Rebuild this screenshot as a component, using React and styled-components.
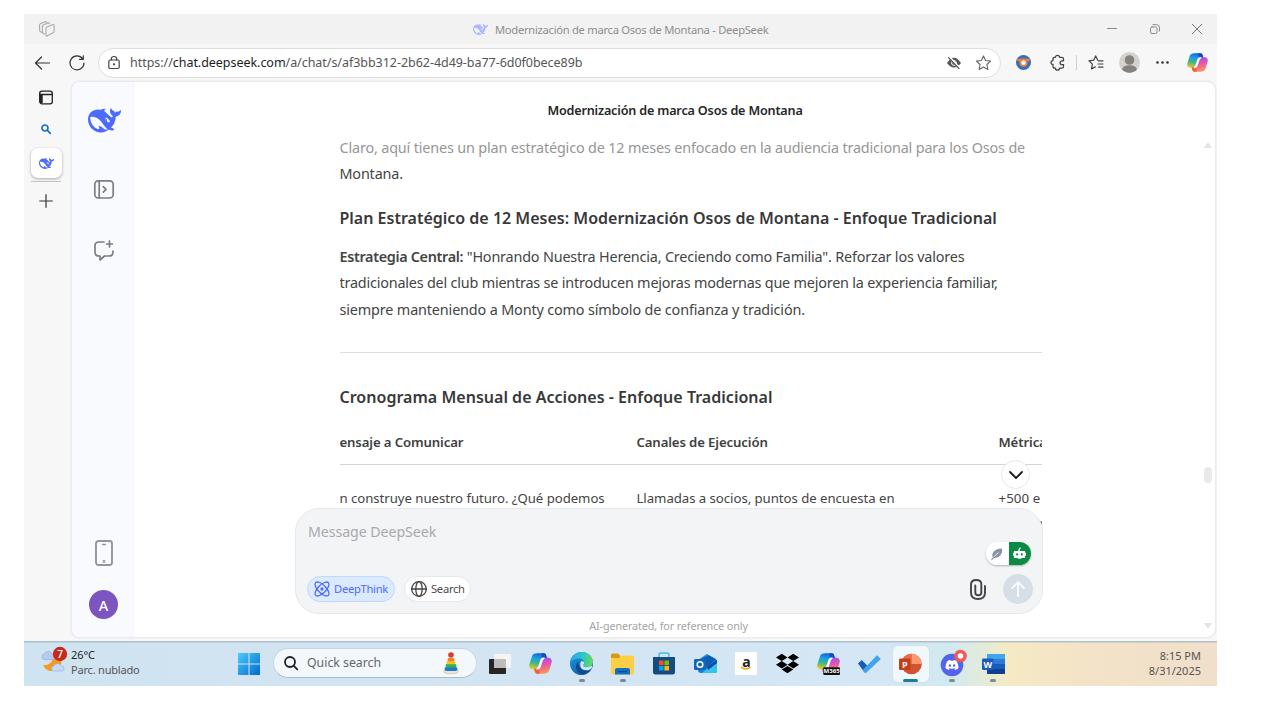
import React from 'react';
import styled, { createGlobalStyle } from 'styled-components';
import { FaDropbox, FaDiscord } from 'react-icons/fa6';

const Global = createGlobalStyle`
  * { box-sizing: border-box; }
  html, body { margin: 0; background: #fff; }
  body { font-family: "Noto Sans", "Open Sans", sans-serif; color: #404040; overflow: hidden; }
  svg { display: block; flex: none; overflow: visible; }
`;

const Screen = styled.div`
  width: 1280px;
  height: 720px;
  padding: 14px 63px 34px 24px;
  background: #fff;
`;
const Desktop = styled.div`
  width: 1193px;
  height: 672px;
  display: flex;
  flex-direction: column;
  background: #f7f7f7;
  overflow: hidden;
`;
const Label = styled.span`
  display: block;
  white-space: nowrap;
  font-size: ${(p) => p.$size || 12}px;
  line-height: ${(p) => p.$line || 18}px;
  font-weight: ${(p) => p.$weight || 400};
  color: ${(p) => p.$color || 'inherit'};
  letter-spacing: ${(p) => p.$track || 0}px;
`;
const Strong = styled.b`
  font-weight: 600;
  letter-spacing: -0.33px;
`;
const Slot = styled.div`
  width: ${(p) => p.$w}px;
  height: ${(p) => (p.$h ? `${p.$h}px` : 'auto')};
  margin-top: ${(p) => p.$top || 0}px;
  flex: none;
  display: flex;
  align-items: center;
  justify-content: center;
`;

/* Title bar */
const TitleBar = styled.header`
  height: 30px;
  flex: none;
  display: flex;
  align-items: center;
  background: #f2f2f2;
`;
const TitleText = styled.div`
  flex: 1;
  display: flex;
  align-items: center;
  gap: 7px;
  padding: 1px 0 0 404px;
`;

/* Browser toolbar */
const Toolbar = styled.nav`
  height: 37px;
  flex: none;
  display: flex;
  align-items: center;
  padding-left: 1px;
`;
const AddressBar = styled.div`
  width: 903px;
  height: 30px;
  margin: 0 6px 0 5px;
  display: flex;
  align-items: center;
  border: 1.5px solid #dedede;
  border-radius: 15px;
  background: #fff;
`;
const Url = styled(Label)`
  flex: 1;
  padding-left: 2px;
  b { font-weight: 400; color: #1c1c1c; }
`;
const Divider = styled.i`
  width: 1px;
  height: 15px;
  margin: 0 1px;
  background: #cfcfcf;
`;

/* Browser body */
const Body = styled.div`
  flex: 1;
  display: flex;
  padding: 0 1px 3px 0;
`;
const TabStrip = styled.aside`
  width: 47px;
  display: flex;
  flex-direction: column;
  align-items: center;
  padding: 9px 3px 0 0;
`;
const ActiveTab = styled.div`
  width: 31px;
  height: 30px;
  display: flex;
  align-items: center;
  justify-content: center;
  border-radius: 7px;
  background: #fff;
  box-shadow: 0 1px 3px rgba(0, 0, 0, 0.32);
`;
const TabRule = styled.i`
  width: 30px;
  height: 1px;
  margin: 3px 0 12px;
  background: #c4c4c4;
`;
const Page = styled.div`
  flex: 1;
  display: flex;
  border: 1px solid #ebebeb;
  border-radius: 9px;
  background: #fff;
  overflow: hidden;
  box-shadow: 0 0 2px rgba(0, 0, 0, 0.1);
`;
const Sidebar = styled.aside`
  width: 63px;
  flex: none;
  display: flex;
  flex-direction: column;
  align-items: center;
  padding: 25px 0 18px;
  background: #f9fafe;
`;
const Spacer = styled.div`
  flex: 1;
`;
const Brand = styled.div`
  height: 26px;
  display: flex;
  align-items: center;
  padding-left: 2px;
`;
const Avatar = styled.div`
  width: 29px;
  height: 29px;
  margin-top: 24px;
  display: flex;
  align-items: center;
  justify-content: center;
  border-radius: 50%;
  background: #7d55c0;
`;

/* Chat */
const ChatArea = styled.div`
  flex: 1;
  min-width: 0;
  display: flex;
`;
const Chat = styled.main`
  flex: 1;
  min-width: 0;
  display: flex;
  flex-direction: column;
  align-items: center;
`;
const ChatTitle = styled.h1`
  height: 53px;
  margin: 0;
  flex: none;
  padding-top: 19px;
`;
const Conversation = styled.section`
  width: 702px;
  height: 392px;
  flex: none;
  overflow: hidden;
  margin-left: 31px;
`;
const Paragraph = styled.p`
  margin: 0;
  margin-bottom: ${(p) => p.$after || 0}px;
`;
const Heading = styled.h3`
  margin: 0 0 ${(p) => p.$after}px;
`;
const Rule = styled.hr`
  height: 1px;
  margin: 0 0 31px;
  border: 0;
  background: #dcdcdc;
`;
const Row = styled.div`
  display: grid;
  grid-template-columns: 297px 362px 200px;
  height: ${(p) => p.$h}px;
  padding-top: ${(p) => p.$top || 0}px;
  border-bottom: 1px solid ${(p) => p.$line || 'transparent'};
`;
const Cell = styled.div``;
const LineEnd = styled.div`
  width: 46px;
  display: flex;
  justify-content: flex-end;
`;
const Composer = styled.section`
  position: relative;
  width: 748px;
  height: 106px;
  margin: -19px 12px 0 0;
  flex: none;
  display: flex;
  flex-direction: column;
  justify-content: space-between;
  padding: 12px 9px 9px 12px;
  border: 1px solid #e6e8ec;
  border-radius: 24px;
  background: #f3f4f6;
`;
const Actions = styled.div`
  display: flex;
  align-items: center;
  height: 30px;
  margin-left: -1px;
`;
const Chip = styled.div`
  width: ${(p) => p.$w}px;
  height: 26px;
  display: flex;
  align-items: center;
  gap: 4px;
  padding-left: 6px;
  margin-right: 9px;
  border: 1px solid ${(p) => (p.$on ? '#bedaff' : '#e6e8eb')};
  border-radius: 13px;
  color: ${(p) => (p.$on ? '#4d6bfe' : '#4c4c4c')};
  background: ${(p) => (p.$on ? '#dbeafe' : '#fff')};
`;
const SendButton = styled.div`
  width: 30px;
  height: 30px;
  margin-left: 17px;
  display: flex;
  align-items: center;
  justify-content: center;
  border-radius: 50%;
  background: #d6dee8;
`;
const ScrollButton = styled.div`
  position: absolute;
  right: 12px;
  top: -49px;
  width: 29px;
  height: 29px;
  display: flex;
  align-items: center;
  justify-content: center;
  border: 1px solid #e6e6e6;
  border-radius: 50%;
  background: #fff;
`;
const AssistToggle = styled.div`
  position: absolute;
  right: 11px;
  top: 33px;
  display: flex;
  width: 45px;
  height: 23px;
  border-radius: 12px;
  overflow: hidden;
  background: #fff;
  box-shadow: 0 1px 2px rgba(0, 0, 0, 0.28);
`;
const AssistHalf = styled.div`
  flex: 1;
  display: flex;
  align-items: center;
  justify-content: center;
  background: ${(p) => p.$bg};
`;
const Disclaimer = styled.footer`
  margin-right: 13px;
`;
const ScrollTrack = styled.div`
  width: 16px;
  flex: none;
  display: flex;
  flex-direction: column;
  align-items: center;
  margin: 0 -1px 0 -15px;
  padding: 60px 0 8px;
`;
const Thumb = styled.i`
  width: 8px;
  height: 16px;
  margin-top: 319px;
  border-radius: 4px;
  background: #e9e9e9;
`;

/* Taskbar */
const Taskbar = styled.footer`
  height: 45px;
  flex: none;
  display: flex;
  border-top: 1px solid #b0c0ca;
  background: linear-gradient(90deg, #d0e3f1 0, #d5e6f4 870px, #d2e9f0 925px, #e1ebdd 955px, #f5eac4 985px, #f3e3c7 1060px, #f0dfcb 100%);
  box-shadow: inset 0 1px 0 rgba(110, 140, 160, 0.2);
`;
const Weather = styled.div`
  width: 204px;
  display: flex;
  padding: 5px 0 0 17px;
  gap: 4px;
`;
const Stack = styled.div`
  display: flex;
  flex-direction: column;
  align-items: ${(p) => p.$align || 'flex-start'};
`;
const SearchBox = styled.div`
  width: 204px;
  height: 30px;
  margin: 6px 2px 0 4px;
  display: flex;
  align-items: center;
  padding: 0 17px 0 10px;
  gap: 9px;
  border: 1px solid #c8d5df;
  border-bottom-color: #a8bac6;
  border-radius: 15px;
  background: #f3f8fc;
`;
const AppSlot = styled.div`
  width: 41.15px;
  flex: none;
  display: flex;
  flex-direction: column;
  align-items: center;
`;
const Tile = styled.div`
  width: 36px;
  height: 36px;
  margin-top: 4px;
  display: flex;
  align-items: center;
  justify-content: center;
  border-radius: 5px;
  background: ${(p) => (p.$active ? 'rgba(246,250,254,.85)' : 'transparent')};
  box-shadow: ${(p) => (p.$active ? '0 0 1px #a9bfce' : 'none')};
  > * { margin-top: -1px; }
`;
const Dot = styled.i`
  width: ${(p) => (p.$active ? 15 : 6)}px;
  height: 3px;
  margin-top: -3px;
  border-radius: 2px;
  background: ${(p) => (p.$active ? '#1b7f93' : '#7f8a90')};
`;
const Clock = styled(Stack)`
  flex: 1;
  padding: 6px 16px 0 0;
`;
const AmazonTile = styled.div`
  width: 22px;
  height: 23px;
  display: flex;
  flex-direction: column;
  align-items: center;
  background: #fff;
  svg { margin-top: -4px; }
`;

/* Icons */
const Line = ({ w = 16, h, box, color = '#333', sw = 1.2, children }) => (
  <svg width={w} height={h || w} viewBox={box || `0 0 ${w} ${h || w}`} fill="none" stroke={color} strokeWidth={sw} strokeLinecap="round" strokeLinejoin="round">{children}</svg>
);
const Whale = ({ size, color = '#4d6bfe' }) => (
  <svg width={size} height={size} viewBox="0 0 24 24" fill={color}>
    <path d="M23.748 4.482c-.254-.124-.364.113-.512.234-.051.039-.094.09-.137.136-.372.397-.806.657-1.373.626-.829-.046-1.537.214-2.163.848-.133-.782-.575-1.248-1.247-1.548-.352-.156-.708-.311-.955-.65-.172-.241-.219-.51-.305-.774-.055-.16-.11-.323-.293-.35-.2-.031-.278.136-.356.276-.313.572-.434 1.202-.422 1.84.027 1.436.633 2.58 1.838 3.393.137.093.172.187.129.323-.082.28-.18.552-.266.833-.055.179-.137.217-.329.14a5.526 5.526 0 01-1.736-1.18c-.857-.828-1.631-1.742-2.597-2.458a11.365 11.365 0 00-.689-.471c-.985-.957.13-1.743.388-1.836.27-.098.093-.432-.779-.428-.872.004-1.67.295-2.687.684a3.055 3.055 0 01-.465.137 9.597 9.597 0 00-2.883-.102c-1.885.21-3.39 1.102-4.497 2.623C.082 8.606-.231 10.684.152 12.85c.403 2.284 1.569 4.175 3.36 5.653 1.858 1.533 3.997 2.284 6.438 2.14 1.482-.085 3.133-.284 4.994-1.86.47.234.962.327 1.78.397.63.059 1.236-.03 1.705-.128.735-.156.684-.837.419-.961-2.155-1.004-1.682-.595-2.113-.926 1.096-1.296 2.746-2.642 3.392-7.003.05-.347.007-.565 0-.845-.004-.17.035-.237.23-.256a4.173 4.173 0 001.545-.475c1.396-.763 1.96-2.015 2.093-3.517.02-.23-.004-.467-.247-.588zM11.581 18c-2.089-1.642-3.102-2.183-3.52-2.16-.392.024-.321.471-.235.763.09.288.207.486.371.739.114.167.192.416-.113.603-.673.416-1.842-.14-1.897-.167-1.361-.802-2.5-1.86-3.301-3.307-.774-1.393-1.224-2.887-1.298-4.482-.02-.386.093-.522.477-.592a4.696 4.696 0 011.529-.039c2.132.312 3.946 1.265 5.468 2.774.868.86 1.525 1.887 2.202 2.891.72 1.066 1.494 2.082 2.48 2.914.348.292.625.514.891.677-.802.09-2.14.11-3.054-.614zm1-6.44a.306.306 0 01.415-.287.302.302 0 01.2.288.306.306 0 01-.31.307.303.303 0 01-.304-.308zm3.11 1.596c-.2.081-.399.151-.59.16a1.245 1.245 0 01-.798-.254c-.274-.23-.47-.358-.552-.758a1.73 1.73 0 01.016-.588c.07-.327-.008-.537-.239-.727-.187-.156-.426-.199-.688-.199a.559.559 0 01-.254-.078c-.11-.054-.2-.19-.114-.358.028-.054.16-.186.192-.21.356-.202.767-.136 1.146.016.352.144.618.408 1.001.782.391.451.462.576.685.914.176.265.336.537.445.848.067.195-.019.354-.25.452z" />
  </svg>
);
const ribbon = 'M8 1.300h6c1.600 0 2 .8 2.400 2l.8 2.600h-1.900c-1.600 0-2.300.9-2.700 2.200l-2 6.200c-.5 1.500-1.200 2.200-2.600 2.200H4.200c-3.200 0-4.600-2-3.800-4.800L2.700 4.500C3.400 2.300 5 1.300 8 1.300z';
const Copilot = ({ id, w = 22, children }) => (
  <svg width={w} height={w} viewBox="0 0 22 22">
    <defs>
      <linearGradient id={`${id}a`} x1=".4" y1="0" x2=".2" y2="1">
        <stop offset="0" stopColor="#1268dc" /><stop offset=".3" stopColor="#1ba0e8" /><stop offset=".6" stopColor="#3fb682" /><stop offset="1" stopColor="#f3cd1e" />
      </linearGradient>
      <linearGradient id={`${id}b`} x1=".3" y1="1" x2=".1" y2="0">
        <stop offset="0" stopColor="#a54cf5" /><stop offset=".45" stopColor="#ee5b9c" /><stop offset="1" stopColor="#ffa14d" />
      </linearGradient>
    </defs>
    <path d={ribbon} fill={`url(#${id}a)`} />
    <path d="M11.800 1.300H14c1.600 0 2 .8 2.400 2l.8 2.600h-1.900c-1.300 0-2 .6-2.500 1.500z" fill="#1648c4" />
    <g transform="rotate(180 11 11)">
      <path d={ribbon} fill={`url(#${id}b)`} />
      <path d="M11.800 1.300H14c1.600 0 2 .8 2.400 2l.8 2.600h-1.900c-1.300 0-2 .6-2.500 1.500z" fill="#f2603a" />
    </g>
    <path d="M14.800 5.900c-1.500 0-2.700.6-3.300 2.300l-1.900 5.700c-.4 1.300-1 2.200-2.400 2.200 1.500 0 2.700-.6 3.300-2.300l1.900-5.700c.4-1.300 1-2.200 2.400-2.200z" fill="#f4f8fc" stroke="#f4f8fc" strokeWidth="1.600" />
    {children}
  </svg>
);
const Atom = () => (
  <Line w={16} color="#4d6bfe" sw={1.3}>
    <ellipse cx="8" cy="8" rx="9" ry="4" transform="rotate(45 8 8)" />
    <ellipse cx="8" cy="8" rx="9" ry="4" transform="rotate(-45 8 8)" />
    <circle cx="8" cy="8" r="1" fill="#4d6bfe" />
  </Line>
);
const Edge = () => (
  <svg width="23" height="23" viewBox="0 0 24 24">
    <defs>
      <linearGradient id="e1" x1="0" y1=".3" x2="1" y2=".4"><stop offset="0" stopColor="#2aa7e6" /><stop offset=".55" stopColor="#2fc5cb" /><stop offset="1" stopColor="#67dc58" /></linearGradient>
      <linearGradient id="e2" x1="0" y1="0" x2=".4" y2="1"><stop offset="0" stopColor="#1b9de0" /><stop offset="1" stopColor="#1261b4" /></linearGradient>
    </defs>
    <circle cx="12" cy="12" r="12" fill="url(#e2)" />
    <path d="M.3 10.500C1.200 4.500 6 0 12 0c6.800 0 12 4.700 12 10 0 4-3 6-6.200 6-2.800 0-4-1-4-1.700 0-.6 1.200-1.100 1.200-3C15 8.800 12.300 6.700 9 6.700c-4.500 0-7.600 2-8.700 3.800z" fill="url(#e1)" />
    <path d="M9 9.500c-3 2-4 8-.5 11.500 3.500 3.400 9.500 2 13-2.500-2.800 1.300-7.500 1.600-10.300-1.200C9 15 8.300 12 9 9.500z" fill="#114a8b" />
    <path d="M11.500 10c1.200-.6 2.600-.2 3.200.6.500 1-.9 2.200-.9 3.700 0 .7 1.200 1.700 4 1.700 2 0 3.700-.6 5-1.800l.3 1.800c-1 1.500-2 2.300-3.500 2.700-3 .8-6.300.2-7.800-1.700-1.300-1.700-1.500-5.400-.3-7z" fill="#d7e8f6" />
  </svg>
);
const OfficeIcon = ({ kind }) => (
  <svg width="23" height="22" viewBox="0 0 23 22">
    {kind === 'P' ? (
      <>
        <circle cx="12.500" cy="11" r="10.300" fill="#d35230" />
        <path d="M12.500.7a10.300 10.300 0 0110.300 10.300H12.500z" fill="#ff9a70" />
        <path d="M12.500.7A10.300 10.300 0 002.200 11h10.300z" fill="#ed6c47" />
      </>
    ) : (
      <>
        <rect x="5" y="1" width="18" height="20" rx="1.300" fill="#185abd" />
        <path d="M5 6V2.300Q5 1 6.300 1h15.400Q23 1 23 2.300V6z" fill="#41a5ee" />
        <path d="M5 6h18v5H5z" fill="#2b7cd3" />
        <path d="M5 16h18v3.700Q23 21 21.700 21H6.300Q5 21 5 19.700z" fill="#103f91" />
      </>
    )}
    <rect x="0" y="5.500" width="11.500" height="11.500" rx="1.200" fill={kind === 'P' ? '#c43e1c' : '#185abd'} />
    <text x="5.800" y="14.500" textAnchor="middle" fontFamily="Open Sans" fontWeight="700" fontSize="9" fill="#fff">{kind}</text>
  </svg>
);

const apps = [
  { name: 'taskview', icon: (
    <svg width="23" height="22" viewBox="0 0 23 22"><rect x="1" y="6" width="17" height="15" rx="1" fill="#262626" /><path d="M6 1h16q1 0 1 1v13H6z" fill="#f5f5f5" /><path d="M6 6h12v9H6z" fill="#bdbdbd" /></svg>) },
  { name: 'copilot', icon: <Copilot id="tc" w={23} /> },
  { name: 'edge', run: true, icon: <Edge /> },
  { name: 'files', run: true, icon: (
    <svg width="23" height="22" viewBox="0 0 23 22"><path d="M0 2q0-1.500 1.500-1.500H7L9.500 3v3H0z" fill="#d99a0f" /><path d="M0 5h8l2-2.500h11.500Q23 2.500 23 4v16q0 1.500-1.500 1.500h-20Q0 21.500 0 20z" fill="#fdcf45" /><path d="M4 21.500V17q0-2 2-2h11q2 0 2 2v4.500z" fill="#1470c2" /><rect x="7" y="18" width="9" height="1.300" rx=".6" fill="#0b4d8d" /></svg>) },
  { name: 'store', icon: (
    <svg width="22" height="23" viewBox="0 0 22 23"><path d="M6 6V2.500Q6 1 7.500 1h7Q16 1 16 2.500V6" fill="none" stroke="#42b8e8" strokeWidth="1.500" /><path d="M0 5h22v15q0 2.500-2.500 2.500h-17Q0 22.500 0 20z" fill="#174a80" /><path d="M6 8.500h4.600v4.600H6z" fill="#f25022" /><path d="M11.400 8.500H16v4.600h-4.600z" fill="#7fba00" /><path d="M6 13.900h4.600v4.600H6z" fill="#00a4ef" /><path d="M11.400 13.900H16v4.600h-4.600z" fill="#ffb900" /></svg>) },
  { name: 'outlook', icon: (
    <svg width="23" height="20" viewBox="0 0 23 20"><path d="M4 6l9-6 10 6v11q0 2-2 2H7q-3 0-3-3z" fill="#1580d8" /><path d="M23 6v11q0 2-2 2H8z" fill="#35c4ee" /><path d="M7 5l8-3.500L22 5l-9 8z" fill="#0c5eb5" /><path d="M13 13l10-7v3l-9 7z" fill="#1145a0" /><rect x="0" y="5" width="12" height="11" rx="1.200" fill="#1066bd" /><circle cx="6" cy="10.500" r="2.800" fill="none" stroke="#fff" strokeWidth="1.500" /></svg>) },
  { name: 'amazon', icon: (
    <AmazonTile><Label $size={14} $line={19} $weight={700} $color="#222">a</Label><svg width="10" height="3" viewBox="0 0 10 3"><path d="M0 0q5 4 9.500 0" fill="none" stroke="#f90" strokeWidth="1.300" /></svg></AmazonTile>) },
  { name: 'dropbox', icon: <FaDropbox size={23} color="#000" /> },
  { name: 'm365', icon: (
    <Copilot id="m3" w={23}><rect x="6" y="14.500" width="16" height="7.500" rx="1" fill="#111" /><text x="14" y="20.500" textAnchor="middle" fontFamily="Open Sans" fontWeight="700" fontSize="5.800" fill="#fff">M365</text></Copilot>) },
  { name: 'todo', icon: (
    <svg width="23" height="18" viewBox="0 0 23 18"><path d="M0 8.500L3.700 5l7.500 7.500-3.700 4.700q-.5.600-1 0z" fill="#195abd" /><path d="M19 .3l3.800 3.600L8.500 17.500q-.9.800-1.800 0l-2.200-2.200z" fill="#41a5ee" /></svg>) },
  { name: 'powerpoint', run: true, active: true, icon: <OfficeIcon kind="P" /> },
  { name: 'discord', run: true, icon: (
    <svg width="24" height="24" viewBox="0 0 24 24"><circle cx="12" cy="13" r="11.300" fill="#5562ea" /><FaDiscord x="5" y="6" size={14} color="#fff" /><circle cx="20.500" cy="4" r="6.300" fill="#ef5a5a" /><circle cx="20.500" cy="4" r="2.800" fill="#fff" /></svg>) },
  { name: 'word', run: true, icon: <OfficeIcon kind="W" /> },
];

const Text = (p) => <Label $size={14.4} $line={26.4} $track={-0.18} $color="#444" {...p} />;
const HeadText = (p) => <Label $size={16} $line={26} $weight={600} $color="#383838" {...p} />;
const HeadCell = (p) => <Label $size={13.2} $line={23} $weight={600} $track={-0.13} $color="#404040" {...p} />;
const CellText = (p) => <Label $size={13.2} $line={25} $track={-0.04} $color="#444" {...p} />;

export default function App() {
  return (
    <Screen>
      <Global />
      <Desktop>
        <TitleBar>
          <Slot $w={45}>
            <Line w={16} color="#aaa" sw={1.1}>
              <path d="M3 11.500l-1.500-.7Q.6 10.300.6 9.300V4q0-.8.8-1.200L6 .8q1-.4 1.500.5M5.500 13l-1.300-.6q-.8-.4-.8-1.400V5.300q0-.8.8-1.200L9 2q1-.4 1.600.5" />
              <path d="M7 7.200q0-.8.8-1.200l5.600-2.300q1.700-.5 1.700 1v5.800q0 .8-.8 1.200l-5.600 2.800Q7 16 7 14.300z" />
            </Line>
          </Slot>
          <TitleText>
            <Whale size={15} color="#abb8fb" />
            <Label $size={11.2} $color="#8e8e8e" $track={-0.28}>Modernización de marca Osos de Montana - DeepSeek</Label>
          </TitleText>
          <Slot $w={43}><Line w={10} color="#888" sw={1}><path d="M.5 4.500h9" /></Line></Slot>
          <Slot $w={43}><Line w={10} color="#888" sw={1}><rect x=".5" y="3" width="6.500" height="6.500" rx="1.500" /><path d="M3 .7h3.500q3 0 3 3V7" /></Line></Slot>
          <Slot $w={41}><Line w={10} color="#777" sw={1}><path d="M.3.3l9.400 9.400M9.700.3L.3 9.700" /></Line></Slot>
        </TitleBar>

        <Toolbar>
          <Slot $w={35}><Line w={16}><path d="M14.500 8H.7M6.500 2l-6 6 6 6" /></Line></Slot>
          <Slot $w={33}><Line w={16}><path d="M13.600 3.700A7 7 0 1015 8M14.300.8v3.500h-3.800" /></Line></Slot>
          <AddressBar>
            <Slot $w={29}><Line w={12} h={13} color="#444"><rect x=".8" y="4" width="10.400" height="8.500" rx="1.500" /><path d="M3.300 4V3Q3.300.5 6 .5T8.700 3v1" /><circle cx="6" cy="8.300" r=".5" fill="#444" /></Line></Slot>
            <Url $size={12.5} $track={-0.04} $color="#555">https://<b>chat.deepseek.com</b>/a/chat/s/af3bb312-2b62-4d49-ba77-6d0f0bece89b</Url>
            <Slot $w={29}>
              <svg width="14" height="12" viewBox="0 0 14 12"><path d="M0 6q7-10.500 14 0-7 9-14 0z" fill="#555" /><circle cx="7" cy="6" r="2.400" fill="none" stroke="#fff" strokeWidth="1" /><path d="M1.800-.3l11 12" stroke="#fff" strokeWidth="2.500" /><path d="M1.300.3l11 11.500" stroke="#444" strokeWidth="1.200" /></svg>
            </Slot>
            <Slot $w={32}><Line w={16} color="#666" sw={1.1}><path d="M7.500 .9l2.100 4.600 5 .6-3.700 3.400 1 5L7.500 12l-4.400 2.500 1-5L.4 6.100l5-.6z" /></Line></Slot>
          </AddressBar>
          <Slot $w={33}>
            <svg width="15" height="15" viewBox="0 0 15 15"><circle cx="7.500" cy="7.500" r="7.500" fill="#3571b8" /><path d="M0 4.500q7.500-2 15 0l-3 2-9 0z" fill="#f08141" /><circle cx="7.500" cy="7.800" r="4" fill="#f08141" /><circle cx="7.500" cy="7.800" r="2.200" fill="#fff" /></svg>
          </Slot>
          <Slot $w={35}><Line w={14} h={15} color="#444" sw={1.3}><path d="M4.500 2.300a2 2 0 014 0h2.200q1.800 0 1.800 1.700v1.800H11a1.900 1.900 0 000 3.800h1.500v1.900q0 1.700-1.800 1.700H8.500a2 2 0 01-4 0H3.600q-1.600 0-1.600-1.700V9.600a2 2 0 010-4V4q0-1.700 1.600-1.700z" /></Line></Slot>
          <Divider />
          <Slot $w={35}><Line w={16} h={15} color="#444"><path d="M9.700 5.200L7.700.9l-2 4.300-4.800.6 3.500 3.300-.9 4.800 3.800-2M10.500 5.800H15M10 9h5M10.500 12.200H15" /></Line></Slot>
          <Slot $w={32}>
            <svg width="21" height="21" viewBox="0 0 21 21"><circle cx="10.500" cy="10.500" r="10.500" fill="#d4d2ce" /><circle cx="10.500" cy="8" r="4.800" fill="#85827d" /><path d="M3 17.500q1-4.300 7.500-4.300t7.500 4.300a10.500 10.500 0 01-15 0z" fill="#85827d" /></svg>
          </Slot>
          <Slot $w={35}><svg width="13" height="3" viewBox="0 0 13 3" fill="#333"><circle cx="1.500" cy="1.500" r="1.300" /><circle cx="6.500" cy="1.500" r="1.300" /><circle cx="11.500" cy="1.500" r="1.300" /></svg></Slot>
          <Slot $w={35}><Copilot id="tb" w={21} /></Slot>
        </Toolbar>

        <Body>
          <TabStrip>
            <Line w={14} h={15} color="#222" sw={1.3}><rect x=".7" y="1.200" width="12.600" height="12.600" rx="2.200" /><path d="M1 4.500h12.300" /><path d="M2.300 5v8" strokeWidth="2.800" strokeLinecap="butt" /></Line>
            <Slot $w={31} $h={26} $top={11}><Line w={10} color="#1272c8" sw={1.7}><circle cx="4" cy="4" r="3" /><path d="M6.400 6.400l2.900 2.900" /></Line></Slot>
            <Slot $w={31} $top={6}><ActiveTab><Whale size={15} /></ActiveTab></Slot>
            <TabRule />
            <Line w={14} color="#333" sw={1.2}><path d="M7 .7v12.600M.7 7h12.600" /></Line>
          </TabStrip>
          <Page>
            <Sidebar>
              <Brand><Whale size={33} /></Brand>
              <Slot $w={30} $h={20} $top={46}>
                <Line w={20} h={19} color="#7d7d7d" sw={1.7}><rect x=".8" y=".8" width="18.400" height="17.200" rx="3.500" /><path d="M5.200 1v17M9.300 6.700l2.700 2.700-2.700 2.700" /></Line>
              </Slot>
              <Slot $w={30} $h={21} $top={41}>
                <Line w={20} h={21} color="#7d7d7d" sw={1.7}><path d="M10 2H5Q1 2 1 6v6q0 4 4 4h1v4l4.500-4H15q4 0 4-4v-1M15.500 1v6M12.500 4h6" /></Line>
              </Slot>
              <Spacer />
              <Line w={18} h={26} color="#969696" sw={1.9}><rect x="1" y="1" width="16" height="24" rx="2.500" /><path d="M7.500 4.500h3" strokeWidth="1.500" /><circle cx="9" cy="21.500" r=".5" /></Line>
              <Avatar><Label $size={14.5} $line={20} $weight={500} $color="#fff">A</Label></Avatar>
            </Sidebar>
            <ChatArea>
              <Chat>
                <ChatTitle><Label $size={12.6} $weight={600} $line={20} $track={-0.17} $color="#262626">Modernización de marca Osos de Montana</Label></ChatTitle>
                <Conversation>
                  <Paragraph $after={17}>
                    <Text $color="#969696" $track={-0.16}>Claro, aquí tienes un plan estratégico de 12 meses enfocado en la audiencia tradicional para los Osos de</Text>
                    <Text>Montana.</Text>
                  </Paragraph>
                  <Heading $after={13}><HeadText>Plan Estratégico de 12 Meses: Modernización Osos de Montana - Enfoque Tradicional</HeadText></Heading>
                  <Paragraph $after={29}>
                    <Text><Strong>Estrategia Central:</Strong> "Honrando Nuestra Herencia, Creciendo como Familia". Reforzar los valores</Text>
                    <Text $track={-0.2}>tradicionales del club mientras se introducen mejoras modernas que mejoren la experiencia familiar,</Text>
                    <Text $track={-0.15}>siempre manteniendo a Monty como símbolo de confianza y tradición.</Text>
                  </Paragraph>
                  <Rule />
                  <Heading $after={21}><HeadText $track={0.02}>Cronograma Mensual de Acciones - Enfoque Tradicional</HeadText></Heading>
                  <Row $h={34} $line="#d4d4d4">
                    <Cell><HeadCell>ensaje a Comunicar</HeadCell></Cell>
                    <Cell><HeadCell>Canales de Ejecución</HeadCell></Cell>
                    <Cell><HeadCell>Métrica</HeadCell></Cell>
                  </Row>
                  <Row $h={80} $top={21}>
                    <Cell><CellText>n construye nuestro futuro. ¿Qué podemos</CellText></Cell>
                    <Cell><CellText>Llamadas a socios, puntos de encuesta en</CellText></Cell>
                    <Cell>
                      <CellText $size={13.3} $track={0.05}>+500 e</CellText>
                      <LineEnd><CellText>r</CellText></LineEnd>
                    </Cell>
                  </Row>
                </Conversation>
                <Composer>
                  <ScrollButton><Line w={14} h={8} color="#1c1c1c" sw={1.8}><path d="M1 1l6 6 6-6" /></Line></ScrollButton>
                  <AssistToggle>
                    <AssistHalf $bg="#fff"><svg width="12" height="12" viewBox="0 0 12 12"><path d="M1.500 9Q.5 5 4 2.500 7.500 0 11 .7q1 3.500-1.300 6.300Q7.500 10 3 10z" fill="#8a94a5" /><path d="M.8 12Q3 7.500 7.500 4.500" stroke="#fff" strokeWidth=".8" fill="none" /><path d="M.5 12L3 8.800" stroke="#8a94a5" strokeWidth="1.200" /></svg></AssistHalf>
                    <AssistHalf $bg="#0b8a43"><svg width="13" height="13" viewBox="0 0 14 14"><path d="M6.500 5V2.800L8 .7" fill="none" stroke="#fff" strokeWidth="1.400" /><path d="M1 4.200h12v1.900h1v3.200h-1v2.600H1V9.300H0V6.100h1z" fill="#fff" /><circle cx="4.500" cy="8" r="1.200" fill="#0b8a43" /><circle cx="9.500" cy="8" r="1.200" fill="#0b8a43" /><path d="M5 12h4v1H5z" fill="#fff" /></svg></AssistHalf>
                  </AssistToggle>
                  <Label $size={14.2} $line={22} $color="#a9a9ab" $track={-0.07}>Message DeepSeek</Label>
                  <Actions>
                    <Chip $w={88} $on><Atom /><Label $size={11.2} $track={-0.28}>DeepThink</Label></Chip>
                    <Chip $w={67}>
                      <Line w={16} color="#444" sw={1.3}><circle cx="8" cy="8" r="7.300" /><ellipse cx="8" cy="8" rx="3.200" ry="7.300" /><path d="M.7 8h14.600" /></Line>
                      <Label $size={11.2} $track={-0.28}>Search</Label>
                    </Chip>
                    <Spacer />
                    <Line w={16} h={21} color="#444" sw={1.9}><path d="M11.300 5.500V5Q11.300 1 6.200 1T1 5.500v8q0 6.500 7 6.500t7-6.500V7M11.300 5v8.500q0 2.800-3 2.800t-3-2.800V6.500" /></Line>
                    <SendButton><Line w={14} h={16} color="#fff" sw={1.8}><path d="M7 15V1.200M1.200 7L7 1.200 12.800 7" /></Line></SendButton>
                  </Actions>
                </Composer>
                <Disclaimer><Label $size={10.8} $line={23} $color="#a3a3a3" $track={-0.12}>AI-generated, for reference only</Label></Disclaimer>
              </Chat>
              <ScrollTrack>
                <svg width="8" height="6" viewBox="0 0 8 6"><path d="M4 0l4 6H0z" fill="#e4e4e4" /></svg>
                <Thumb />
                <Spacer />
                <svg width="8" height="6" viewBox="0 0 8 6"><path d="M0 0h8L4 6z" fill="#e4e4e4" /></svg>
              </ScrollTrack>
            </ChatArea>
          </Page>
        </Body>

        <Taskbar>
          <Weather>
            <svg width="26" height="28" viewBox="0 0 26 28">
              <path d="M20 12a9.500 9.500 0 01-18 6q7 1 10-6z" fill="#f59a1d" />
              <path d="M3 12.500a2.800 2.800 0 01.5-5.500 4 4 0 017.500 0 3 3 0 011 5.500z" fill="#b5ccf0" stroke="#7f9fd6" strokeWidth=".5" />
              <path d="M12 24a2.600 2.600 0 01.5-5 4.500 4.500 0 018 0 2.600 2.600 0 011 5z" fill="#c6daf7" stroke="#7f9fd6" strokeWidth=".5" />
              <circle cx="19" cy="7" r="7.200" fill="#c42b1c" />
              <text x="19" y="10.700" textAnchor="middle" fontFamily="Open Sans" fontWeight="600" fontSize="10" fill="#fff">7</text>
            </svg>
            <Stack>
              <Label $size={11} $line={15} $color="#222" $track={-0.1}>26°C</Label>
              <Label $size={11} $line={15} $color="#555" $track={-0.2}>Parc. nublado</Label>
            </Stack>
          </Weather>
          <Slot $w={41} $h={44}>
            <svg width="22" height="22" viewBox="0 0 22 22"><defs><linearGradient id="wn" x1="0" y1="0" x2="1" y2="1"><stop offset="0" stopColor="#4ccbf9" /><stop offset="1" stopColor="#0069cf" /></linearGradient></defs><path d="M.8 0h9.700v10.500H0V.8Q0 0 .8 0zM11.500 0h9.700q.8 0 .8.800v9.700H11.500zM0 11.500h10.500V22H.8Q0 22 0 21.200zM11.500 11.500H22v9.700q0 .8-.8.800h-9.700z" fill="url(#wn)" /></svg>
          </Slot>
          <SearchBox>
            <Line w={14} color="#1f1f1f" sw={1.8}><circle cx="6" cy="6" r="5" /><path d="M9.800 9.800l3.500 3.500" /></Line>
            <Label $size={12.3} $color="#666">Quick search</Label>
            <Spacer />
            <svg width="16" height="22" viewBox="0 0 16 22"><ellipse cx="8" cy="19.500" rx="7.500" ry="2.300" fill="#efe4c8" stroke="#b3a583" strokeWidth=".4" /><rect x="1.500" y="15" width="13" height="4" rx="2" fill="#1f78d6" /><rect x="2.500" y="12" width="11" height="3.500" rx="1.700" fill="#35b04a" /><rect x="3.500" y="9" width="9" height="3.300" rx="1.600" fill="#f4c11e" /><rect x="4.500" y="6" width="7" height="3.300" rx="1.600" fill="#f0822a" /><circle cx="8" cy="3" r="2.800" fill="#e03a2b" /></svg>
          </SearchBox>
          {apps.map((a) => (
            <AppSlot key={a.name}>
              <Tile $active={a.active}>{a.icon}</Tile>
              {a.run && <Dot $active={a.active} />}
            </AppSlot>
          ))}
          <Clock $align="flex-end">
            <Label $size={11} $line={15} $color="#555">8:15 PM</Label>
            <Label $size={11} $line={15} $color="#555">8/31/2025</Label>
          </Clock>
        </Taskbar>
      </Desktop>
    </Screen>
  );
}
